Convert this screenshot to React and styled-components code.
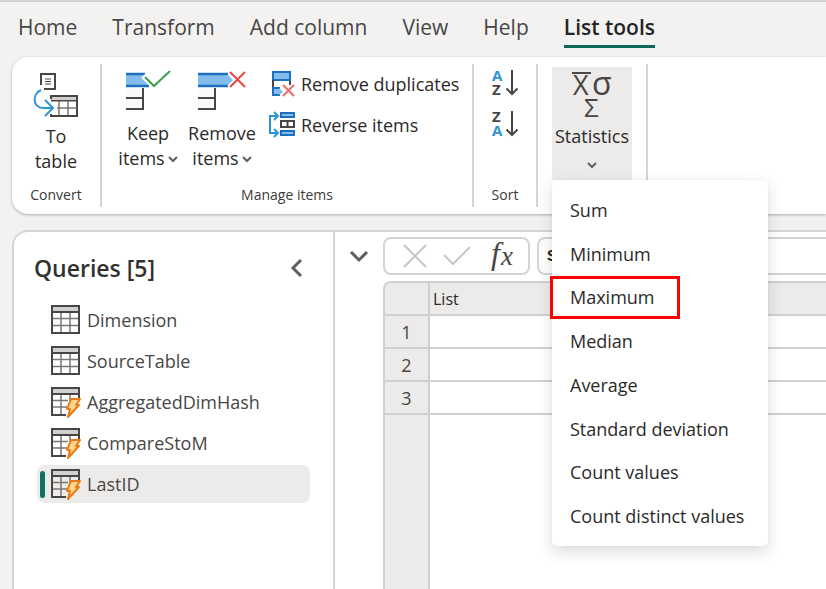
import React from 'react';
import styled, { createGlobalStyle, css } from 'styled-components';

const GlobalStyle = createGlobalStyle`
  *, *::before, *::after { box-sizing: border-box; }
  body {
    margin: 0;
    background: #f3f2f1;
    color: #2b2a29;
    font-family: "Open Sans", "Noto Sans", sans-serif;
    font-size: 18px;
    overflow: hidden;
  }
  button, input { font: inherit; color: inherit; }
  button { background: none; border: 0; padding: 0; margin: 0; cursor: pointer; }
  svg { overflow: visible; }
`;

const Page = styled.div`
  display: flex;
  flex-direction: column;
  height: 100vh;
  border-top: 2px solid #d2d0ce;
`;

const TabBar = styled.nav`
  display: flex;
  flex: none;
  gap: 35px;
  height: 55px;
  padding: 10px 18px 0;
`;

const Tab = styled.button`
  flex: none;
  height: 36px;
  padding-bottom: 4px;
  font-size: 21px;
  line-height: 28px;
  white-space: nowrap;
  color: #484644;
  border-bottom: 3px solid transparent;
  ${(p) => p.$active && css`
    font-weight: 600;
    color: #252423;
    border-bottom-color: #0c695a;
  `}
`;

const Ribbon = styled.section`
  display: flex;
  flex: none;
  height: 157px;
  margin-left: 12px;
  padding: 7px 0;
  background: #fff;
  border-radius: 16px 0 0 16px;
  box-shadow: 0 1px 3px rgba(0, 0, 0, 0.3);
  position: relative;
  z-index: 2;
`;

const Group = styled.div`
  display: flex;
  flex-direction: column;
  flex: none;
  justify-content: space-between;
  width: ${(p) => p.$width}px;
  border-right: 2px solid #d6d4d2;
  position: relative;
`;

const GroupBody = styled.div`
  display: flex;
  justify-content: ${(p) => (p.$start ? 'flex-start' : 'center')};
  gap: 9px;
  padding: ${(p) => (p.$start ? '3px 0 0 14px' : '3px 0 0')};
`;

const GroupLabel = styled.div`
  height: 24px;
  font-size: 14px;
  line-height: 24px;
  text-align: center;
  white-space: nowrap;
  color: ${(p) => (p.$accent ? '#f0c987' : '#3b3a39')};
`;

const BigButton = styled.button`
  display: flex;
  flex-direction: column;
  align-items: center;
  width: ${(p) => p.$width}px;
  line-height: 25px;
  white-space: nowrap;
  background: ${(p) => (p.$pressed ? '#edebe9' : 'transparent')};
  height: ${(p) => (p.$pressed ? '113px' : 'auto')};
`;

const BigIcon = styled.span`
  display: flex;
  justify-content: center;
  align-items: flex-end;
  height: ${(p) => p.$height}px;
  padding-bottom: ${(p) => p.$gap}px;
`;

const WithChevron = styled.span`
  display: flex;
  align-items: center;
  gap: 3px;
`;

const ChevronBelow = styled.span`
  display: flex;
  flex: 1;
  align-items: center;
`;

const CommandStack = styled.div`
  display: flex;
  flex-direction: column;
  align-items: flex-start;
  gap: 8px;
  padding-left: ${(p) => (p.$inset ? '4px' : '0')};
`;

const Command = styled.button`
  display: flex;
  align-items: center;
  gap: 5px;
  height: 33px;
  white-space: nowrap;
`;

const Menu = styled.div`
  display: flex;
  flex-direction: column;
  position: absolute;
  top: 116px;
  left: 14px;
  width: 216px;
  height: 366px;
  padding: 8px 0;
  background: #fff;
  border-radius: 5px;
  box-shadow: 0 6px 16px rgba(0, 0, 0, 0.14), 0 0 3px rgba(0, 0, 0, 0.05);
`;

const MenuItem = styled.button`
  flex: 1;
  padding-left: 18px;
  text-align: left;
  white-space: nowrap;
  position: relative;
  ${(p) => p.$marked && css`
    &::after {
      content: "";
      position: absolute;
      top: 0;
      bottom: 0;
      left: -2px;
      width: 130px;
      border: 3px solid #fe0000;
    }
  `}
`;

const Workspace = styled.main`
  display: flex;
  flex: 1;
  min-height: 0;
  margin: 16px 0 0 12px;
  background: #fff;
  border: 2px solid #d6d4d2;
  border-width: 2px 0 0 2px;
  border-radius: 16px 0 0 0;
`;

const QueryPane = styled.aside`
  flex: none;
  width: 321px;
  padding: 20px 23px 0 20px;
  border-right: 2px solid #d6d4d2;
`;

const PaneHeader = styled.header`
  display: flex;
  justify-content: space-between;
  align-items: center;
  height: 32px;
  padding-right: 7px;
`;

const PaneTitle = styled.h2`
  margin: 0;
  font-size: 23px;
  font-weight: 600;
  color: #323130;
`;

const IconButton = styled.button`
  display: flex;
`;

const QueryList = styled.ul`
  display: flex;
  flex-direction: column;
  gap: 3px;
  margin: 17px 0 0 3px;
  padding: 0;
  list-style: none;
`;

const Query = styled.button`
  display: flex;
  align-items: center;
  gap: 6px;
  width: 100%;
  height: 38px;
  padding-left: 3px;
  border-radius: 8px;
  color: #484644;
  background: ${(p) => (p.$active ? '#edebe9' : 'transparent')};
  &::before {
    content: "";
    width: 5px;
    height: 27px;
    border-radius: 3px;
    background: ${(p) => (p.$active ? '#0c7562' : 'transparent')};
  }
`;

const Editor = styled.section`
  display: flex;
  flex: 1;
  min-width: 0;
  padding-top: 5px;
`;

const Toggle = styled.button`
  display: flex;
  align-items: center;
  justify-content: center;
  flex: none;
  width: 48px;
  height: 38px;
`;

const EditorBody = styled.div`
  display: flex;
  flex: 1;
  flex-direction: column;
  gap: 6px;
  min-width: 0;
`;

const FormulaBar = styled.div`
  display: flex;
  flex: none;
  gap: 7px;
  height: 38px;
`;

const FormulaTools = styled.div`
  display: flex;
  flex: none;
  align-items: center;
  justify-content: space-between;
  width: 147px;
  padding: 0 15px 0 18px;
  border: 2px solid #d6d4d2;
  border-radius: 8px;
`;

const FormulaInput = styled.input`
  flex: 1;
  min-width: 0;
  padding: 0 0 0 8px;
  font: bold 17px "Liberation Mono", monospace;
  border: 2px solid #d6d4d2;
  border-right: 0;
  border-radius: 8px 0 0 8px;
  background: #fffffd;
`;

const GridFrame = styled.div`
  flex: 1;
  min-height: 0;
  overflow: hidden;
  border: 2px solid #d2d0ce;
  border-width: 2px 0 0 2px;
  border-radius: 8px 0 0 0;
  background: linear-gradient(to right, #edebe9 43px, #d2d0ce 43px, #d2d0ce 45px, #fff 45px);
`;

const Table = styled.table`
  width: 100%;
  border-collapse: separate;
  border-spacing: 0;
  th, td {
    height: 33px;
    padding: 0;
    border-bottom: 2px solid #d2d0ce;
    font-weight: 400;
    line-height: 24px;
  }
  th { background: #edebe9; }
  td { background: #fff; }
`;

const RowNumber = styled.th`
  width: 45px;
  border-right: 2px solid #d2d0ce;
  color: #484644;
`;

const ColumnHeader = styled.th`
  && {
    padding-left: 3px;
    font-size: 16px;
    text-align: left;
  }
`;

const ink = '#484644';
const blue = '#1e70bf';
const sky = '#83bdec';

const Chevron = () => (
  <svg width="10" height="8" viewBox="0 0 10 8" fill="none" stroke="#605e5c" strokeWidth="2">
    <path d="M1 2 5 6 9 2" />
  </svg>
);

const ToTableIcon = () => (
  <svg width="46" height="48" viewBox="0 0 46 48" fill="none" stroke={ink} strokeWidth="2">
    <path d="M8 13V2H22V17H11" fill="#fff" />
    <path d="M12 7H18M12 9.500H18M12 12H18" strokeWidth="1.200" />
    <path d="M18 27V24H44V44H18V42M18 28.500H44" />
    <path d="M19 25H43V28H19Z" fill="#d2d0ce" stroke="none" />
    <path d="M26 29V43M35 29V43M24 36H44" strokeWidth="1.500" stroke="#797775" />
    <path d="M8 18C-1 22-1 36 11 36H20M12 28 20 36 12 44" stroke="#2b94d6" />
  </svg>
);

const ItemsIcon = ({ remove }) => (
  <svg width={remove ? 48 : 44} height="42" viewBox={remove ? '0 0 48 42' : '0 0 44 42'} fill="none">
    <path d="M0 17H16V38H0" fill="#fafafa" />
    <path d="M17 17V38M0 27H17M0 38H18" stroke={ink} strokeWidth="2" />
    {remove ? (
      <>
        <path d="M0 3H29L35 9 29 15H0Z" fill={sky} />
        <path d="M0 3H30M0 15H30" stroke={blue} strokeWidth="2.500" />
        <path d="M32 1 47 16M47 1 32 16" stroke="#ee4444" strokeWidth="2" />
      </>
    ) : (
      <>
        <path d="M0 3H17L23 15H0Z" fill={sky} />
        <path d="M0 3H19M0 15H23" stroke={blue} strokeWidth="2.500" />
        <path d="M17 5 28 16 44 0" stroke="#fff" strokeWidth="5" />
        <path d="M19 6 28 15 44 0" stroke="#3a9e4c" strokeWidth="2" />
      </>
    )}
  </svg>
);

const DuplicatesIcon = () => (
  <svg width="28" height="28" viewBox="0 0 28 28" fill="none">
    <path d="M5 2H22V10H5Z" fill={sky} stroke={blue} strokeWidth="2" />
    <path d="M5 10V18M22 11V15" stroke={ink} strokeWidth="2" />
    <path d="M12 18H5V25H12" fill={sky} stroke={blue} strokeWidth="2" />
    <path d="M11 18 15 22 11 25Z" fill={sky} />
    <path d="M15 15 26 26M26 15 15 26" stroke="#f06a6a" strokeWidth="2" />
  </svg>
);

const ReverseIcon = () => (
  <svg width="28" height="28" viewBox="0 0 28 28" fill="none" strokeWidth="2">
    <path d="M9 5H2V22H9M6 1 10 5 6 9M6 18 10 22 6 26" stroke="#2b94d6" />
    <path d="M13 2H26V6H13ZM13 20H26V24H13Z" fill={sky} stroke={blue} />
    <path d="M13 10H26V16H13ZM19.500 10V16" stroke={ink} />
  </svg>
);

const SortIcon = ({ descending }) => (
  <svg width="28" height="30" viewBox="0 0 28 30">
    <g fontFamily="Open Sans, sans-serif" fontSize="15" fontWeight="700">
      <text x="1" y="12" fill={descending ? ink : '#2b94d6'}>{descending ? 'Z' : 'A'}</text>
      <text x="1" y="26" fill={descending ? '#2b94d6' : ink}>{descending ? 'A' : 'Z'}</text>
    </g>
    <path d="M21 1V25M15.500 19.500 21 25 26.500 19.500" fill="none" stroke={ink} strokeWidth="2" />
  </svg>
);

const StatisticsIcon = () => (
  <svg width="44" height="50" viewBox="0 0 44 50" fill={ink} fontFamily="Open Sans, sans-serif">
    <path d="M2 3H21" stroke={ink} strokeWidth="2" />
    <text x="3" y="25" fontSize="27">X</text>
    <text x="22" y="25" fontSize="32">σ</text>
    <text x="14" y="47" fontSize="26">Σ</text>
  </svg>
);

const TableIcon = ({ live }) => (
  <svg width="30" height="32" viewBox="1 0 30 32" fill="none">
    <path d="M2 3H29V7H2Z" fill="#d2d0ce" />
    <path
      d={live ? 'M11 8V28M20 8V16M2 14.500H18M2 21H17' : 'M11 8V29M20 8V29M2 14.500H29M2 21.500H29'}
      stroke="#797775"
      strokeWidth="1.500"
    />
    <path
      d={live ? 'M16 29H2V2H29V12M2 8H29' : 'M2 2H29V29H2ZM2 8H29'}
      stroke={ink}
      strokeWidth="2"
    />
    {live && (
      <path
        d="M21 13H30L26 19H29L18 31 20 23H17Z"
        fill="#fcd58a"
        stroke="#e87b13"
        strokeWidth="2"
        strokeLinejoin="round"
      />
    )}
  </svg>
);

const TABS = ['Home', 'Transform', 'Add column', 'View', 'Help', 'List tools'];
const QUERIES = [
  { name: 'Dimension' },
  { name: 'SourceTable' },
  { name: 'AggregatedDimHash', live: true },
  { name: 'CompareStoM', live: true },
  { name: 'LastID', live: true },
];
const STATISTICS = [
  'Sum', 'Minimum', 'Maximum', 'Median', 'Average',
  'Standard deviation', 'Count values', 'Count distinct values',
];

export default function App() {
  return (
    <Page>
      <GlobalStyle />
      <TabBar>
        {TABS.map((name) => (
          <Tab key={name} $active={name === 'List tools'}>{name}</Tab>
        ))}
      </TabBar>

      <Ribbon>
        <Group $width={90}>
          <GroupBody>
            <BigButton $width={60}>
              <BigIcon $height={57} $gap={4}><ToTableIcon /></BigIcon>
              <span>To</span>
              <span>table</span>
            </BigButton>
          </GroupBody>
          <GroupLabel>Convert</GroupLabel>
        </Group>

        <Group $width={372}>
          <GroupBody $start>
            <BigButton $width={64}>
              <BigIcon $height={54} $gap={8}><ItemsIcon /></BigIcon>
              <span>Keep</span>
              <WithChevron>items<Chevron /></WithChevron>
            </BigButton>
            <BigButton $width={66}>
              <BigIcon $height={54} $gap={8}><ItemsIcon remove /></BigIcon>
              <span>Remove</span>
              <WithChevron>items<Chevron /></WithChevron>
            </BigButton>
            <CommandStack $inset>
              <Command><DuplicatesIcon />Remove duplicates</Command>
              <Command><ReverseIcon />Reverse items</Command>
            </CommandStack>
          </GroupBody>
          <GroupLabel>Manage items</GroupLabel>
        </Group>

        <Group $width={64}>
          <GroupBody>
            <CommandStack>
              <Command aria-label="Sort ascending"><SortIcon /></Command>
              <Command aria-label="Sort descending"><SortIcon descending /></Command>
            </CommandStack>
          </GroupBody>
          <GroupLabel>Sort</GroupLabel>
        </Group>

        <Group $width={110}>
          <GroupBody>
            <BigButton $width={80} $pressed>
              <BigIcon $height={57} $gap={4}><StatisticsIcon /></BigIcon>
              <span>Statistics</span>
              <ChevronBelow><Chevron /></ChevronBelow>
            </BigButton>
          </GroupBody>
          <GroupLabel $accent>Numeric list</GroupLabel>
          <Menu role="menu">
            {STATISTICS.map((name) => (
              <MenuItem key={name} role="menuitem" $marked={name === 'Maximum'}>{name}</MenuItem>
            ))}
          </Menu>
        </Group>
      </Ribbon>

      <Workspace>
        <QueryPane>
          <PaneHeader>
            <PaneTitle>Queries [5]</PaneTitle>
            <IconButton aria-label="Collapse queries">
              <svg width="14" height="20" viewBox="0 0 14 20" fill="none" stroke="#605e5c" strokeWidth="3">
                <path d="M12 2 4 10 12 18" />
              </svg>
            </IconButton>
          </PaneHeader>
          <QueryList>
            {QUERIES.map(({ name, live }) => (
              <li key={name}>
                <Query $active={name === 'LastID'}>
                  <TableIcon live={live} />
                  {name}
                </Query>
              </li>
            ))}
          </QueryList>
        </QueryPane>

        <Editor>
          <Toggle aria-label="Expand formula bar">
            <svg width="20" height="14" viewBox="0 0 20 14" fill="none" stroke="#605e5c" strokeWidth="3">
              <path d="M2 3 10 11 18 3" />
            </svg>
          </Toggle>
          <EditorBody>
            <FormulaBar>
              <FormulaTools>
                <IconButton aria-label="Cancel">
                  <svg width="24" height="24" viewBox="0 0 24 24" fill="none" stroke="#c8c6c4" strokeWidth="2">
                    <path d="M1 1 23 23M23 1 1 23" />
                  </svg>
                </IconButton>
                <IconButton aria-label="Apply">
                  <svg width="28" height="24" viewBox="0 0 28 24" fill="none" stroke="#c8c6c4" strokeWidth="2">
                    <path d="M1 11 10 20 27 3" />
                  </svg>
                </IconButton>
                <IconButton aria-label="Formula">
                  <svg width="26" height="30" viewBox="0 0 26 30" fill={ink} fontFamily="Liberation Serif, serif" fontStyle="italic">
                    <text x="4" y="23" fontSize="32">f</text>
                    <text x="14" y="24" fontSize="27">x</text>
                  </svg>
                </IconButton>
              </FormulaTools>
              <FormulaInput aria-label="Formula" defaultValue="S" />
            </FormulaBar>
            <GridFrame>
              <Table>
                <thead>
                  <tr>
                    <RowNumber />
                    <ColumnHeader>List</ColumnHeader>
                  </tr>
                </thead>
                <tbody>
                  {[1, 2, 3].map((n) => (
                    <tr key={n}>
                      <RowNumber>{n}</RowNumber>
                      <td />
                    </tr>
                  ))}
                </tbody>
              </Table>
            </GridFrame>
          </EditorBody>
        </Editor>
      </Workspace>
    </Page>
  );
}
